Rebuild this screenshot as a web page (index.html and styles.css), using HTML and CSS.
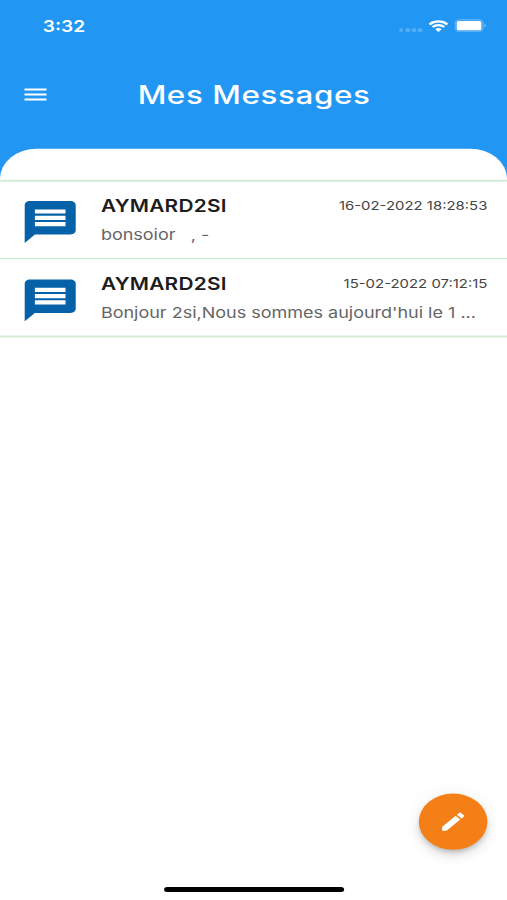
FILE: index.html
```
<!DOCTYPE html>
<html lang="fr">
<head>
    <meta charset="UTF-8">
    <meta name="viewport" content="width=device-width, initial-scale=1.0">
    <title>Mes Messages</title>
    <link rel="stylesheet" href="styles.css">
</head>
<body>
    <div class="screen">
        <header class="header">
            <div class="status-bar">
                <span class="time">3:32</span>
                <div class="status-icons">
                    <span class="signal"><i></i><i></i><i></i><i></i></span>
                    <svg class="wifi" viewBox="0 0 16 12">
                        <path d="M0.7 4.3A10.4 10.4 0 0 1 15.3 4.3" />
                        <path d="M3.2 7A6.8 6.8 0 0 1 12.8 7" />
                        <path class="wifi-dot" d="M5.4 9.2A3.7 3.7 0 0 1 10.6 9.2L8 11.9z" />
                    </svg>
                    <svg class="battery" viewBox="0 0 26 13">
                        <rect class="battery-case" x="0.5" y="0.5" width="23" height="12" rx="3.6" />
                        <rect x="2" y="2" width="20" height="9" rx="1.5" />
                        <path class="battery-tip" d="M24.7 4.5c1.3.6 1.3 3.4 0 4z" />
                    </svg>
                </div>
            </div>
            <div class="title-bar">
                <button class="menu" aria-label="Menu">
                    <svg viewBox="0 0 24 24"><path d="M3 18h18v-2H3v2zm0-5h18v-2H3v2zm0-7v2h18V6H3z" /></svg>
                </button>
                <h1 class="title">Mes Messages</h1>
            </div>
        </header>

        <main class="panel">
            <div class="message">
                <svg class="message-icon" viewBox="0 0 24 24"><path d="M20 2H4c-1.1 0-1.99.9-1.99 2L2 22l4-4h14c1.1 0 2-.9 2-2V4c0-1.1-.9-2-2-2zm-2 12H6v-2h12v2zm0-3H6V9h12v2zm0-3H6V6h12v2z" /></svg>
                <div class="message-body">
                    <div class="message-top">
                        <span class="sender">AYMARD2SI</span>
                        <span class="date">16-02-2022 18:28:53</span>
                    </div>
                    <div class="preview">bonsoior&nbsp;&nbsp; , -</div>
                </div>
            </div>
            <div class="message">
                <svg class="message-icon" viewBox="0 0 24 24"><path d="M20 2H4c-1.1 0-1.99.9-1.99 2L2 22l4-4h14c1.1 0 2-.9 2-2V4c0-1.1-.9-2-2-2zm-2 12H6v-2h12v2zm0-3H6V9h12v2zm0-3H6V6h12v2z" /></svg>
                <div class="message-body">
                    <div class="message-top">
                        <span class="sender">AYMARD2SI</span>
                        <span class="date">15-02-2022 07:12:15</span>
                    </div>
                    <div class="preview">Bonjour 2si,Nous sommes aujourd'hui le 1 ...</div>
                </div>
            </div>
        </main>

        <button class="compose" aria-label="Nouveau message">
            <svg viewBox="0 0 24 24"><path d="M3 17.46v3.04c0 .28.22.5.5.5h3.04c.13 0 .26-.05.35-.15L17.81 9.94l-3.75-3.75L3.15 17.1c-.1.1-.15.22-.15.36zM20.71 7.04c.39-.39.39-1.02 0-1.41l-2.34-2.34c-.39-.39-1.02-.39-1.41 0l-1.83 1.83 3.75 3.75 1.83-1.83z" /></svg>
        </button>
        <div class="home-bar"></div>
    </div>
</body>
</html>
```
FILE: styles.css
```
* {
    box-sizing: border-box;
}

body {
    margin: 0;
    width: 507px;
    height: 900px;
    overflow: hidden;
    background: #fff;
    font-family: Inter, "Liberation Sans", sans-serif;
}

/* 414x896 phone screen stretched to fill the window */
.screen {
    position: relative;
    width: 414px;
    height: 896px;
    transform: scale(1.22464, 1.00446);
    transform-origin: 0 0;
    background: linear-gradient(#2196f3 177px, #fff 177px);
}

.header {
    height: 148px;
    color: #fff;
}

.status-bar {
    display: flex;
    justify-content: space-between;
    align-items: center;
    height: 51px;
    padding: 0 17px 0 35px;
}

.time {
    padding-top: 1px;
    font-size: 15.6px;
    font-weight: 600;
}

.status-icons {
    display: flex;
    align-items: center;
    gap: 5px;
}

.signal {
    display: flex;
    gap: 1.6px;
    padding-top: 8px;
}

.signal i {
    width: 3.6px;
    height: 4px;
    border-radius: 50%;
    background: rgba(255, 255, 255, 0.22);
}

.wifi {
    width: 16px;
    height: 12px;
    fill: none;
    stroke: #fff;
    stroke-width: 2.1;
}

.wifi .wifi-dot {
    fill: #fff;
    stroke: none;
}

.battery {
    width: 26px;
    height: 13px;
    fill: #fff;
}

.battery .battery-case {
    fill: rgba(255, 255, 255, 0.15);
    stroke: rgba(255, 255, 255, 0.2);
}

.battery .battery-tip {
    fill: rgba(255, 255, 255, 0.45);
}

.title-bar {
    display: grid;
    grid-template-columns: 24px 1fr 24px;
    align-items: center;
    height: 86px;
    padding: 0 17px;
}

.menu {
    padding: 0;
    border: none;
    background: none;
    height: 24px;
}

.menu svg {
    width: 24px;
    height: 24px;
    fill: #fff;
}

.title {
    margin: 0;
    padding: 1px 0 0 1px;
    text-align: center;
    font-size: 25.6px;
    font-weight: 500;
    letter-spacing: 0.5px;
}

.panel {
    padding-top: 31px;
    border-radius: 30px 30px 0 0;
    background: #fff;
}

.message {
    height: 78px;
    display: flex;
    padding: 16px 16px 0 16.4px;
    border-top: 1px solid #c5e5c8;
}

.message:first-child {
    padding-top: 15px;
    border-top: 2px solid #d6ecd8;
}

.message:last-child {
    height: 79px;
    border-bottom: 2px solid #d6ecd8;
}

.message-icon {
    flex: none;
    width: 50px;
    height: 50px;
    fill: #0662a8;
}

.message-body {
    flex: 1;
    margin-left: 16px;
}

.message-top {
    display: flex;
    justify-content: space-between;
    align-items: center;
    height: 18px;
}

.sender {
    font-size: 17px;
    font-weight: 600;
    letter-spacing: 0.2px;
    color: #1c1c1c;
}

.date {
    padding-bottom: 2px;
    font-size: 12.2px;
    color: #444;
}

.preview {
    margin-top: 9px;
    font-size: 14.7px;
    line-height: 22px;
    white-space: nowrap;
    color: #666;
}

.compose {
    position: absolute;
    right: 16px;
    bottom: 50px;
    display: flex;
    justify-content: center;
    align-items: center;
    width: 56px;
    height: 56px;
    padding: 0;
    border: none;
    border-radius: 50%;
    background: #f57f17;
    box-shadow: 0 3px 5px -1px rgba(0, 0, 0, 0.2), 0 6px 10px rgba(0, 0, 0, 0.1), 0 1px 18px rgba(0, 0, 0, 0.06);
}

.compose svg {
    width: 24px;
    height: 24px;
    fill: #fff;
}

.home-bar {
    position: absolute;
    left: 133.5px;
    bottom: 8px;
    width: 147.5px;
    height: 5px;
    border-radius: 3px;
    background: #000;
}
```
